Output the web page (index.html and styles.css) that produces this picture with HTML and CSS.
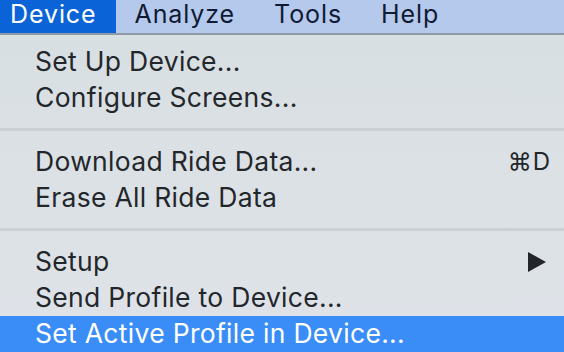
FILE: index.html
```html
<!DOCTYPE html>
<html>
<head>
<meta charset="utf-8">
<link rel="stylesheet" href="styles.css">
</head>
<body>
<div class="menubar">
  <div class="top active">Device</div>
  <div class="top">Analyze</div>
  <div class="top">Tools</div>
  <div class="top">Help</div>
</div>
<div class="menu">
  <div class="item"><span>Set Up Device...</span></div>
  <div class="item"><span>Configure Screens...</span></div>
  <div class="sep"></div>
  <div class="item"><span>Download Ride Data...</span><span class="key">⌘D</span></div>
  <div class="item"><span>Erase All Ride Data</span></div>
  <div class="sep"></div>
  <div class="item"><span>Setup</span><svg class="arrow" width="18" height="20" viewBox="0 0 18 20"><path d="M0 0 L18 10 L0 20 Z" fill="#22262a"/></svg></div>
  <div class="item"><span>Send Profile to Device...</span></div>
  <div class="item selected"><span>Set Active Profile in Device...</span></div>
</div>
</body>
</html>
```
FILE: styles.css
```css
html, body {
  margin: 0;
  padding: 0;
  width: 564px;
  height: 352px;
  overflow: hidden;
  font-family: Inter, "Liberation Sans", Arial, sans-serif;
  background: #dde2e7;
}
body {
  display: flex;
  flex-direction: column;
}
.menubar {
  display: flex;
  height: 33px;
  flex: none;
  background: #b4c9ec;
  border-bottom: 2px solid #8f99a4;
  color: #0f1a33;
  font-size: 25px;
  letter-spacing: 0.9px;
}
.top {
  padding: 0 20px 0 19px;
  line-height: 28px;
}
.top.active {
  background: #0b64d7;
  color: #fff;
  padding: 0 19px 0 10px;
}
.menu {
  flex: 1;
  padding-top: 9px;
  background: linear-gradient(180deg, #d8dfe2 0%, #dfe3e9 100%);
  color: #23272b;
  font-size: 26.5px;
  letter-spacing: 0.3px;
}
.item {
  height: 36px;
  box-sizing: border-box;
  display: flex;
  align-items: center;
  justify-content: space-between;
  padding: 0 13px 2px 35px;
}
.key {
  letter-spacing: 1px;
  font-size: 24px;
}
.arrow {
  margin: 2px 5px 0 0;
}
.sep {
  height: 3px;
  background: #cbd0d5;
  margin: 12px 0 13px;
}
.selected {
  background: #3a8df6;
  color: #fff;
}
```
